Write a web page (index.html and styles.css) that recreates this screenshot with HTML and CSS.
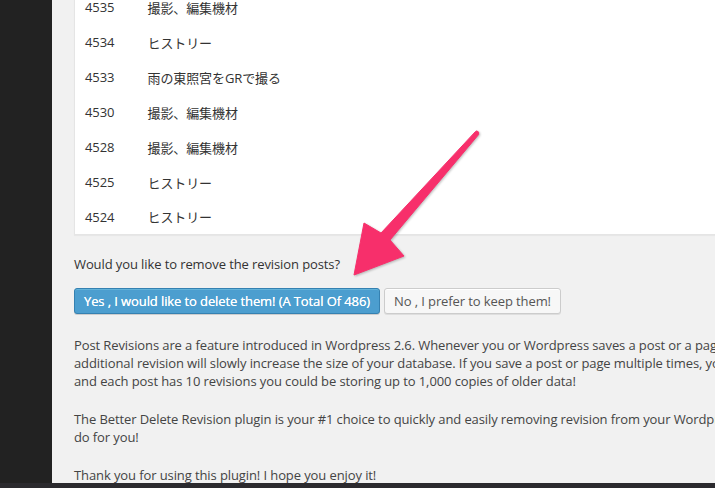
FILE: index.html
```html
<!DOCTYPE html>
<html lang="en">

<head>
  <meta charset="UTF-8">
  <meta name="viewport" content="width=device-width, initial-scale=1.0">
  <title>Better Delete Revision</title>
  <link rel="stylesheet" href="styles.css">
</head>

<body>

  <!-- admin menu column -->
  <div class="admin-menu"></div>

  <!-- plugin page -->
  <div class="wrap">

    <!-- revision list -->
    <table class="revisions">
      <tr><td class="col-id">4535</td><td>撮影、編集機材</td></tr>
      <tr><td class="col-id">4534</td><td>ヒストリー</td></tr>
      <tr><td class="col-id">4533</td><td>雨の東照宮をGRで撮る</td></tr>
      <tr><td class="col-id">4530</td><td>撮影、編集機材</td></tr>
      <tr><td class="col-id">4528</td><td>撮影、編集機材</td></tr>
      <tr><td class="col-id">4525</td><td>ヒストリー</td></tr>
      <tr><td class="col-id">4524</td><td>ヒストリー</td></tr>
    </table>

    <p class="question">Would you like to remove the revision posts?</p>

    <div class="actions">
      <button class="button button-primary">Yes , I would like to delete them! (A Total Of 486)</button>
      <button class="button">No , I prefer to keep them!</button>
    </div>

    <!-- plugin description -->
    <div class="about">
      <p>Post Revisions are a feature introduced in Wordpress 2.6. Whenever you or Wordpress saves a post or a page, a revision is automatically created and stored in your Wordpress database. Each<br>
        additional revision will slowly increase the size of your database. If you save a post or page multiple times, your number of revisions will greatly increase overtime. For example, if you have 100 posts<br>
        and each post has 10 revisions you could be storing up to 1,000 copies of older data!</p>
      <p>The Better Delete Revision plugin is your #1 choice to quickly and easily removing revision from your Wordpress database. Try it out today to see what it can<br>
        do for you!</p>
      <p>Thank you for using this plugin! I hope you enjoy it!</p>
    </div>
  </div>

  <!-- annotation arrow -->
  <svg class="arrow" width="715" height="488" viewBox="0 0 715 488">
    <path d="M475.6 131.4 L381 233 L364 223 L354 275 L404 256 L390 240 L478.6 134.6 Q479.5 131.5 477 131 Q476 130.9 475.6 131.4 Z" fill="#f72f6b" stroke="#f72f6b" stroke-width="1" stroke-linejoin="round" />
  </svg>

  <!-- dock strip -->
  <div class="dock"></div>

</body>

</html>
```

FILE: styles.css
```css
/* page */
body {
  margin: 0;
  padding: 0;
  background-color: #f1f1f1;
  font-family: "Open Sans", "Noto Sans CJK JP", sans-serif;
  font-size: 13px;
  letter-spacing: -0.1px;
  color: #444;
  display: flex;
  height: 488px;
  overflow: hidden;
  position: relative;
}

.admin-menu {
  width: 52px;
  flex-shrink: 0;
  background-color: #222;
}

.wrap {
  padding-left: 22px;
  flex: 1;
  min-width: 0;
}

/* table css */
.revisions {
  width: 100%;
  margin-top: -11px;
  border-collapse: collapse;
  background-color: #fff;
  border: 1px solid #e5e5e5;
  border-right: 0;
  box-shadow: 0 1px 1px rgba(0, 0, 0, 0.04);
}

.revisions td {
  height: 35px;
  padding: 0 10px;
  box-sizing: border-box;
  color: #333;
  white-space: nowrap;
}

.revisions .col-id {
  width: 63px;
}

.question {
  margin: 20px 0 15px;
  line-height: 18px;
  color: #333;
}

/* buttons */
.actions {
  display: flex;
  gap: 4px;
}

.button {
  height: 26px;
  padding: 0 9px;
  font-family: inherit;
  font-size: 13px;
  letter-spacing: -0.1px;
  line-height: 24px;
  border: 1px solid #ccc;
  border-radius: 3px;
  background-color: #f7f7f7;
  color: #555;
  box-shadow: inset 0 1px 0 #fff, 0 1px 0 rgba(0, 0, 0, 0.08);
}

.button-primary {
  background-color: #4c9ecf;
  border-color: #3581b1;
  color: #fff;
  text-shadow: 0 0 0.4px #fff;
  box-shadow: inset 0 1px 0 rgba(120, 200, 230, 0.5), 0 1px 0 rgba(0, 0, 0, 0.15);
}

/* description */
.about {
  margin-top: 22px;
  white-space: nowrap;
}

.about p {
  margin: 0 0 20px;
  line-height: 18px;
}

/* overlays */
.arrow {
  position: absolute;
  left: 0;
  top: 0;
  pointer-events: none;
  filter: drop-shadow(1px 1px 1px rgba(0, 0, 0, 0.25));
}

.dock {
  position: absolute;
  left: 0;
  right: 0;
  bottom: 0;
  height: 5px;
  background-color: #2b2a2e;
}
```
